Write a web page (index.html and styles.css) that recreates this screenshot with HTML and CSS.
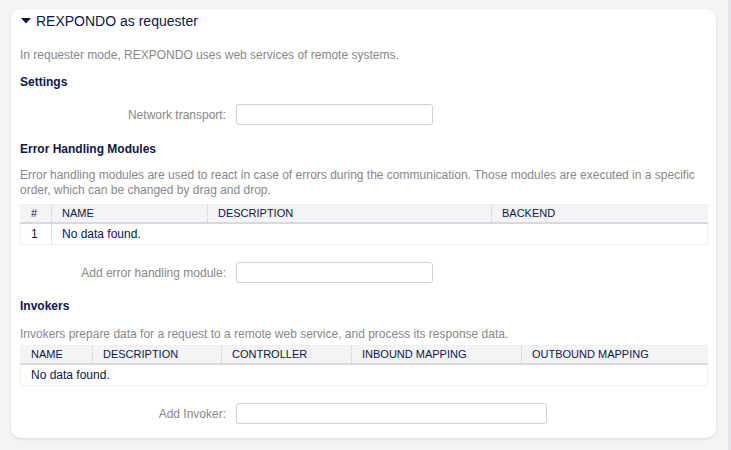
FILE: index.html
```html
<!DOCTYPE html>
<html lang="en">
<head>
    <meta charset="UTF-8">
    <meta name="viewport" content="width=device-width, initial-scale=1.0">
    <title>REXPONDO as requester</title>
    <link rel="stylesheet" href="styles.css">
</head>
<body>
    <div class="widget">
        <div class="widget__header">
            <svg class="toggle" width="10" height="6" viewBox="0 0 10 6"><path d="M0 0 H10 L5 5.5 Z" fill="#0b1846"/></svg>
            <span class="widget__title">REXPONDO as requester</span>
        </div>
        <div class="widget__content">
            <p class="desc desc--intro">In requester mode, REXPONDO uses web services of remote systems.</p>

            <h2 class="section section--settings">Settings</h2>
            <div class="field field--first">
                <label class="field__label">Network transport:</label>
                <div class="field__input"></div>
            </div>

            <h2 class="section section--errors">Error Handling Modules</h2>
            <p class="desc desc--two">Error handling modules are used to react in case of errors during the communication. Those modules are executed in a specific order, which can be changed by drag and drop.</p>
            <table class="data data--errors">
                <colgroup>
                    <col style="width:31px">
                    <col style="width:156px">
                    <col style="width:284px">
                    <col style="width:216px">
                </colgroup>
                <thead>
                    <tr><th>#</th><th>Name</th><th>Description</th><th>Backend</th></tr>
                </thead>
                <tbody>
                    <tr><td class="sep">1</td><td colspan="3">No data found.</td></tr>
                </tbody>
            </table>
            <div class="field">
                <label class="field__label">Add error handling module:</label>
                <div class="field__input"></div>
            </div>

            <h2 class="section section--invokers">Invokers</h2>
            <p class="desc desc--invokers">Invokers prepare data for a request to a remote web service, and process its response data.</p>
            <table class="data data--invokers">
                <colgroup>
                    <col style="width:72px">
                    <col style="width:129px">
                    <col style="width:130px">
                    <col style="width:170px">
                    <col style="width:186px">
                </colgroup>
                <thead>
                    <tr><th>Name</th><th>Description</th><th>Controller</th><th>Inbound Mapping</th><th>Outbound Mapping</th></tr>
                </thead>
                <tbody>
                    <tr><td colspan="5">No data found.</td></tr>
                </tbody>
            </table>
            <div class="field">
                <label class="field__label">Add Invoker:</label>
                <div class="field__input field__input--wide"></div>
            </div>
        </div>
    </div>
</body>
</html>
```

FILE: styles.css
```css
body {
    margin: 0;
    background-color: #f4f4f6;
    font-family: "Liberation Sans", Arial, sans-serif;
    font-size: 12px;
    color: #0b1846;
    min-height: 100vh;
    box-shadow: inset -3px 0 0 #e4e4e8;
}
.widget {
    margin: 9px 0 0 11px;
    width: 705px;
    box-sizing: border-box;
    background: #fff;
    border-radius: 10px;
    box-shadow: 0 1px 3px rgba(20, 20, 60, 0.12);
    padding: 4px 9px 14px;
}
.widget__header {
    display: flex;
    align-items: center;
    height: 16px;
    padding-left: 1px;
}
.toggle {
    margin-right: 5px;
}
.widget__title {
    font-size: 14px;
    line-height: 16px;
    color: #0b1846;
}
.desc {
    margin: 0;
    color: #888;
    line-height: 15px;
}
.desc--intro { margin-top: 19px; }
.desc--two { margin-top: 11px; }
.desc--invokers { margin-top: 13px; }
.section {
    margin: 15px 0 0;
    font-size: 12px;
    font-weight: bold;
    line-height: 15px;
    color: #0b1846;
}
.section--settings { margin-top: 12px; }
.section--errors { margin-top: 17px; }
.section--invokers { margin-top: 16px; }
.field {
    display: flex;
    align-items: center;
    gap: 10px;
    margin-top: 17px;
}
.field--first { margin-top: 14px; }
.field__label {
    width: 206px;
    text-align: right;
    color: #888;
}
.field__input {
    width: 197px;
    height: 21px;
    box-sizing: border-box;
    border: 1px solid #cfcfd4;
    border-radius: 3px;
    background: #fff;
}
.field__input--wide { width: 311px; }
.data {
    width: 687px;
    table-layout: fixed;
    border-collapse: collapse;
    border: 1px solid #f0f0f2;
}
.data--errors { margin-top: 6px; }
.data--invokers { margin-top: 3px; }
.data th {
    background: #f4f4f6;
    font-size: 11px;
    font-weight: normal;
    text-transform: uppercase;
    text-align: left;
    line-height: 15px;
    padding: 1px 10px;
    border-bottom: 2px solid #d9d9dd;
    border-left: 1px dotted #c8c8cc;
    white-space: nowrap;
}
.data th:first-child {
    border-left: 1px solid #f0f0f2;
}
.data td {
    line-height: 16px;
    padding: 2px 10px;
    border-bottom: 1px solid #f0f0f2;
}
.data td.sep {
    border-right: 1px dotted #c8c8cc;
}
```
